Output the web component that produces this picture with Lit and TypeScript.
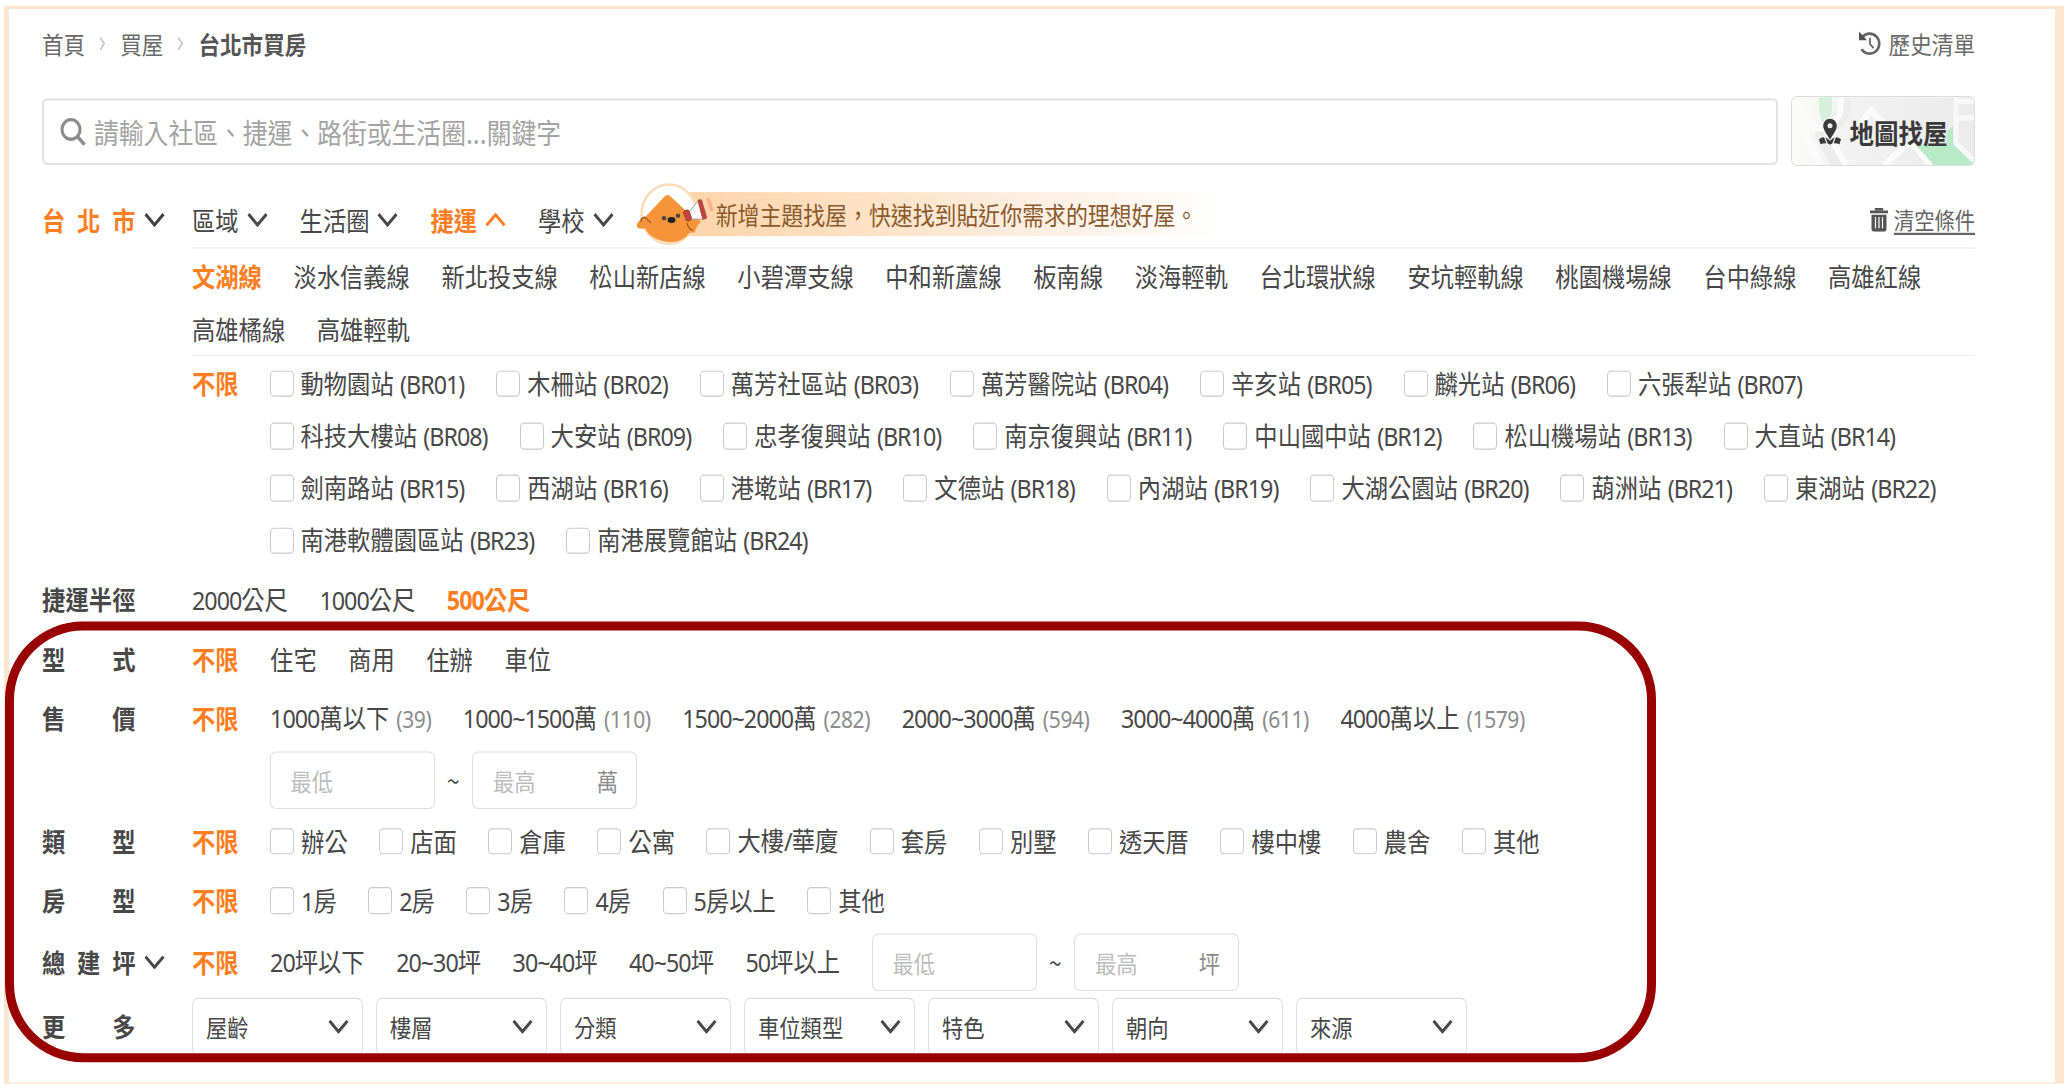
import { LitElement, html, css } from "lit";
import { customElement } from "lit/decorators.js";

const LINES = ["文湖線","淡水信義線","新北投支線","松山新店線","小碧潭支線","中和新蘆線","板南線","淡海輕軌","台北環狀線","安坑輕軌線","桃園機場線","台中綠線","高雄紅線","高雄橘線","高雄輕軌"];
const STATIONS = ["動物園站","木柵站","萬芳社區站","萬芳醫院站","辛亥站","麟光站","六張犁站","科技大樓站","大安站","忠孝復興站","南京復興站","中山國中站","松山機場站","大直站","劍南路站","西湖站","港墘站","文德站","內湖站","大湖公園站","葫洲站","東湖站","南港軟體園區站","南港展覽館站"]
  .map((n, i) => `${n} (BR${String(i + 1).padStart(2, "0")})`);
const PRICES: [string, number][] = [["1000萬以下",39],["1000~1500萬",110],["1500~2000萬",282],["2000~3000萬",594],["3000~4000萬",611],["4000萬以上",1579]];
const KINDS = ["辦公","店面","倉庫","公寓","大樓/華廈","套房","別墅","透天厝","樓中樓","農舍","其他"];
const ROOMS = ["1房","2房","3房","4房","5房以上","其他"];
const AREAS = ["20坪以下","20~30坪","30~40坪","40~50坪","50坪以上"];
const MORE = ["屋齡","樓層","分類","車位類型","特色","朝向","來源"];

// Latin runs are set a little tighter than the CJK text around them.
const mix = (t: string) =>
  t.split(/([\x20-\x7e]+)/).filter(Boolean).map((p) => (/^[\x20-\x7e]/.test(p) ? html`<span class="lat">${p}</span>` : p));

const chev = (up = false) => html`<svg class="chev" viewBox="0 0 21 13" preserveAspectRatio="none"><path d=${up ? "M1.5 11.5L10.5 2L19.5 11.5" : "M1.5 1.5L10.5 11L19.5 1.5"} fill="none" stroke="currentColor" stroke-width="2.8"/></svg>`;

const sep = html`<svg class="sep" viewBox="0 0 8 14"><path d="M1.5 1L6 7L1.5 13" fill="none" stroke="#bbb" stroke-width="1.5"/></svg>`;

const mascot = html`<svg class="mascot" viewBox="0 0 78 62" preserveAspectRatio="none">
  <ellipse cx="33" cy="31" rx="27.5" ry="29.5" fill="#fff" stroke="#fcdcb6" stroke-width="2.5"/>
  <path d="M29 13Q31.500 11 34 13L57 34Q60 38 57 43Q51 59 33 59Q14 57 8 43Q6 38 9 34Z" fill="#f7943a"/>
  <path d="M9 33Q4 34 4 37Q0 40 1 44Q5 47 12 44M56 36Q63 35 65 39Q60 42 59 49L51 50" fill="#f7943a"/>
  <path d="M5 39Q5 34 9 34L15 40M51 40Q53 47 57 47" fill="none" stroke="#8a4a20" stroke-width="1"/>
  <circle cx="28" cy="35" r="2.2" fill="#444"/><circle cx="42" cy="32.500" r="2.200" fill="#444"/>
  <ellipse cx="35.500" cy="36.800" rx="4" ry="3" fill="#222"/>
  <path d="M53 29L62 18L67 36L56 36Z" fill="#fff" stroke="#888" stroke-width=".8"/>
  <path d="M47 29Q51 25 53.500 28L55.500 35Q54 40 50 37Z" fill="#c8413b" stroke="#7a4a38" stroke-width=".6"/>
  <path d="M61.500 17Q64 15.500 66 17L71 34Q70 37 66.500 36Z" fill="#bf4338"/><path d="M72 15L76 28" stroke="#fbb08c" stroke-width="3.500"/>
</svg>`;

const mapArt = html`<svg class="art" viewBox="0 0 182 62" preserveAspectRatio="none">
  <defs><linearGradient id="fade"><stop offset="0" stop-color="#fbfbfa"/><stop offset=".3" stop-color="#f2f2f2"/><stop offset="1" stop-color="#ebebeb"/></linearGradient></defs>
  <rect width="182" height="62" fill="url(#fade)"/>
  <path d="M58 0Q62 26 38 32L52 62H38L22 34" fill="#ececec"/>
  <path d="M27 0H40V14Q36 22 30 23Q26 12 27 0Z" fill="#d6f0dc"/>
  <path d="M48 0Q52 20 34 28Q14 32 6 2M34 30L54 62M12 30L28 62M60 34L79 12L100 32M92 62L119 40L138 62" stroke="#fbfbfb" stroke-width="6" fill="none"/>
  <path d="M124 44L155 42V32L161 26V43L182 59V62H142Z" fill="#b9eac8"/>
  <path d="M164 0V42L182 58M164 19H182M164 4H182" stroke="#f8f8f8" stroke-width="5" fill="none"/>
</svg>`;

@customElement("app-root")
export class AppRoot extends LitElement {
  static styles = css`
    :host { display: block; width: 2066px; height: 1086px; overflow: hidden; background: #fff; }
    * { box-sizing: border-box; }
    .stage { width: 2066px; height: 961.06px; transform: scaleY(1.13); transform-origin: 0 0; position: relative;
      font: 23.3px/31px "Noto Sans CJK TC", sans-serif; color: #484848; padding: 5.3px 2px 0 4px; }
    .frame { height: 954.2px; border: solid #fde6d0; border-width: 3.6px 9px 1.500px 5px; padding: 0 80px 0 33px; display: flex; flex-direction: column; }
    .frame > * { flex: none; }
    svg { display: block; flex: none; }
    .lat { font-family: "Noto Sans", sans-serif; letter-spacing: -1px; word-spacing: 1.3px; }
    .top { display: flex; justify-content: space-between; height: 60px; align-items: center; font-size: 21.6px; color: #6a6a6a; }
    .crumbs, .hist { display: flex; align-items: center; }
    .crumbs b { color: #555; font-weight: 700; }
    .sep { width: 7px; height: 13px; margin: 0 14px; }
    .hist svg { width: 24px; height: 22px; margin-right: 7px; }
    .search { display: flex; gap: 13px; height: 62px; margin-top: 17px; align-items: center; }
    .box { flex: 1; height: 59.500px; border: 2px solid #e3e3e3; border-radius: 5px; display: flex; align-items: center; padding-left: 16px; color: #a4a4a4; font-size: 24.8px; }
    .box svg { width: 26px; height: 25px; margin-right: 8px; }
    .map { width: 184px; height: 62px; border: 1.500px solid #dcdcdc; border-radius: 6px; position: relative; overflow: hidden; display: flex; align-items: center; justify-content: center; font-size: 24.500px; font-weight: 700; color: #3a3a3a; }
    .art { position: absolute; inset: 0; width: 100%; height: 100%; }
    .pin { width: 22px; height: 23px; margin-right: 9px; position: relative; }
    .map span { position: relative; }
    .tabs { display: flex; height: 51.500px; margin-top: 21.500px; }
    .lab { width: 150px; flex: none; font-weight: 700; display: flex; align-items: center; }
    .lab .w { width: 93.500px; display: flex; justify-content: space-between; white-space: nowrap; }
    .lab .chev { margin-left: 8px; }
    .chev { width: 21px; height: 13px; }
    .dark { color: #404040; }
    .on, .lab.on { color: #ff7e1f; font-weight: 700; }
    .bar { flex: 1; display: flex; align-items: center; border-bottom: 1.500px solid #f0f0f0; }
    .tab { display: flex; align-items: center; gap: 8px; margin-right: 32px; }
    .promo { display: flex; align-items: center; position: relative; margin-left: -9px; height: 39px; margin-top: -10px; width: 600px; padding-left: 79px; color: #8a5a2c; font-size: 21.900px; background: linear-gradient(90deg, transparent 35px, #fcd3a6 35px, #fdeee0 65%, #fff 97%); }
    .mascot { position: absolute; left: -1px; top: -8px; width: 78px; height: 55px; }
    .clear { margin-left: auto; display: flex; align-items: center; color: #666; font-size: 20.300px; }
    .clear svg { width: 18px; height: 21px; margin-right: 6px; }
    .clear u { text-underline-offset: 3px; }
    .lines { margin-left: 150px; display: flex; flex-wrap: wrap; gap: 15.300px 31.500px; padding: 9px 0 0; border-bottom: 1.500px solid #f0f0f0; height: 94.300px; align-content: flex-start; }
    .lines span { height: 31px; }
    .row { display: flex; align-items: center; }
    .items { display: flex; gap: 0 31.500px; align-items: center; white-space: nowrap; }
    .st { display: flex; margin-left: 150px; padding-top: 9.500px; height: 189.700px; align-items: flex-start; }
    .st .all { width: 77.500px; flex: none; }
    .st .items { flex-wrap: wrap; gap: 15.300px 32px; }
    .ck { display: flex; align-items: center; gap: 7px; height: 31px; }
    .ck i { width: 24px; height: 23.500px; border: 1.800px solid #cacaca; border-radius: 4px; background: #fff; }
    small { font-size: 21px; color: #8c8c8c; margin-left: 7px; }
    small .lat { letter-spacing: -.4px; }
    .inp { width: 165px; height: 51px; border: 1.500px solid #dedede; border-radius: 6px; padding: 0 18px 0 20px; display: flex; align-items: center; justify-content: space-between; color: #bcbcbc; font-size: 21.300px; }
    .inp em { font-style: normal; color: #8c8c8c; }
    .rng { display: flex; align-items: center; }
    .rng > span { width: 37.500px; text-align: center; }
    .sel { width: 171px; height: 51px; border: 1.500px solid #dedede; border-radius: 6px; padding: 0 13px; display: flex; align-items: center; justify-content: space-between; font-size: 21.300px; }
    .mark { position: absolute; left: 5px; top: 549.800px; width: 1651.300px; height: 390.700px; border: solid #990000; border-width: 8px 9px; border-radius: 78px / 69px; }
    .more { gap: 13px; }
    .indent { padding-left: 227.500px; }
  `;
  label(t: string, arrow = false) {
    return html`<div class="lab"><span class="w">${[...t].map((c) => html`<span>${c}</span>`)}</span>${arrow ? chev() : ""}</div>`;
  }
  check(t: string) { return html`<span class="ck"><i></i><span>${mix(t)}</span></span>`; }
  range(unit: string) {
    return html`<div class="rng"><div class="inp">最低</div><span>~</span><div class="inp">最高<em>${unit}</em></div></div>`;
  }
  row(h: number, label: unknown, body: unknown) {
    return html`<div class="row" style="height:${h}px">${label}<div class="items">${body}</div></div>`;
  }
  render() {
    const all = html`<span class="on">不限</span>`;
    return html`<div class="stage"><div class="frame">
      <div class="top">
        <div class="crumbs"><span>首頁</span>${sep}<span>買屋</span>${sep}<b>台北市買房</b></div>
        <div class="hist"><svg viewBox="0 0 24 24" preserveAspectRatio="none"><path d="M4.500 6A9.700 9.700 0 1 1 3.500 18" fill="none" stroke="#666" stroke-width="2.600"/><path d="M1 1V9.500H9Z" fill="#555"/><path d="M12 7V13L15.500 17" fill="none" stroke="#666" stroke-width="1.800"/></svg>歷史清單</div>
      </div>
      <div class="search">
        <div class="box"><svg viewBox="0 0 26 26" preserveAspectRatio="none"><circle cx="11" cy="11" r="9" fill="none" stroke="#8c8c8c" stroke-width="3"/><path d="M17.500 17.500L24.500 25" stroke="#8c8c8c" stroke-width="3.300"/></svg>請輸入社區、捷運、路街或生活圈...關鍵字</div>
        <div class="map">${mapArt}<svg class="pin" viewBox="0 0 22 26" preserveAspectRatio="none"><path d="M0 20.500Q4 17.500 8 19.500L11 22L14 19.500Q18 17.500 22 20.500L20.500 25.500Q15 23.500 11 26Q7 23.500 1.500 25.500Z" fill="#3a3a3a"/><path d="M5.500 18L8.500 26M16.500 18L13.500 26" stroke="#f4f4f4" stroke-width="1.300"/><path d="M11 0A6.800 7 0 0 1 17.800 7C17.800 11 14.500 15 11 21C7.500 15 4.200 11 4.200 7A6.800 7 0 0 1 11 0Z" fill="#3a3a3a"/><circle cx="11" cy="7" r="2.500" fill="#f4f4f4"/></svg><span>地圖找屋</span></div>
      </div>
      <div class="tabs">
        <div class="lab on"><span class="w"><span>台</span><span>北</span><span>市</span></span><span class="dark">${chev()}</span></div>
        <div class="bar">
          <span class="tab">區域${chev()}</span><span class="tab">生活圈${chev()}</span><span class="tab on">捷運${chev(true)}</span><span class="tab">學校${chev()}</span>
          <div class="promo">${mascot}新增主題找屋，快速找到貼近你需求的理想好屋。</div>
          <div class="clear"><svg viewBox="0 0 18 21" preserveAspectRatio="none"><path d="M6 2V.8H12V2M0 3.500H18" stroke="#555" stroke-width="2.400" fill="none"/><path d="M1.500 6H16.500V18.500Q16.500 21 14 21H4Q1.500 21 1.500 18.500Z" fill="#555"/><path d="M5.500 8V18M9 8V18M12.500 8V18" stroke="#fff" stroke-width="1.200"/></svg><u>清空條件</u></div>
        </div>
      </div>
      <div class="lines">${LINES.map((l, i) => html`<span class=${i ? "" : "on"}>${l}</span>`)}</div>
      <div class="st"><span class="all on">不限</span><div class="items">${STATIONS.map((s) => this.check(s))}</div></div>
      ${this.row(52.5, this.label("捷運半徑"), html`<span>${mix("2000公尺")}</span><span>${mix("1000公尺")}</span><span class="on">${mix("500公尺")}</span>`)}
      ${this.row(52.5, this.label("型式"), html`${all}${["住宅","商用","住辦","車位"].map((t) => html`<span>${t}</span>`)}`)}
      ${this.row(52.5, this.label("售價"), html`${all}${PRICES.map(([t, n]) => html`<span>${mix(t)}<small><span class="lat">(${n})</span></small></span>`)}`)}
      <div class="row indent" style="height:56.5px">${this.range("萬")}</div>
      ${this.row(52.3, this.label("類型"), html`${all}${KINDS.map((s) => this.check(s))}`)}
      ${this.row(52.8, this.label("房型"), html`${all}${ROOMS.map((s) => this.check(s))}`)}
      ${this.row(55.6, this.label("總建坪", true), html`${all}${AREAS.map((t) => html`<span>${mix(t)}</span>`)}${this.range("坪")}`)}
      <div class="row" style="height:58.5px">${this.label("更多")}<div class="items more">${MORE.map((t) => html`<div class="sel">${t}${chev()}</div>`)}</div></div>
    </div><div class="mark"></div></div>`;
  }
}
